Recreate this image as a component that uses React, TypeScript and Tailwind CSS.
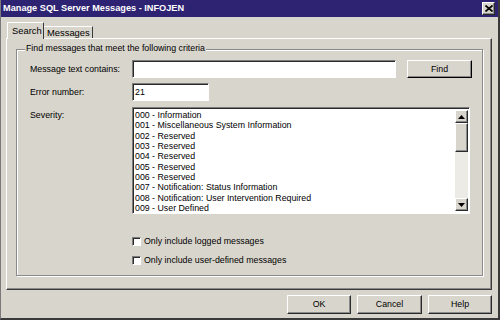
import React from "react";

const raised =
  "border border-t-white border-l-white border-r-[#2a2a2a] border-b-[#2a2a2a] shadow-[inset_-1px_-1px_0_#8a8a8a]";
const sunken =
  "border border-t-[#7c7c7c] border-l-[#7c7c7c] border-r-white border-b-white shadow-[inset_1px_1px_0_#2a2a2a]";

const severities = [
  "000 - Information",
  "001 - Miscellaneous System Information",
  "002 - Reserved",
  "003 - Reserved",
  "004 - Reserved",
  "005 - Reserved",
  "006 - Reserved",
  "007 - Notification: Status Information",
  "008 - Notification: User Intervention Required",
  "009 - User Defined",
];

function Arrow({ up }: { up?: boolean }) {
  return (
    <svg width="7" height="4" viewBox="0 0 7 4">
      <polygon points={up ? "3.5,0 7,4 0,4" : "0,0 7,0 3.5,4"} fill="#000" />
    </svg>
  );
}

function Button({ label, w }: { label: string; w: string }) {
  return (
    <div className={`${w} h-[19px] ${raised} bg-[#d8d5cc] flex items-center justify-center`}>
      {label}
    </div>
  );
}

function Check({ label }: { label: string }) {
  return (
    <div className="flex items-center h-[12px]">
      <div className={`w-[9px] h-[9px] ${sunken} bg-white`} />
      <span className="ml-[3px]">{label}</span>
    </div>
  );
}

export default function App() {
  return (
    <div className="w-[500px] h-[320px] bg-[#d8d5cc] flex flex-col overflow-hidden border-l border-r-2 border-b-2 border-l-[#7a7a7a] border-r-[#3a3a3a] border-b-[#3a3a3a] font-['Liberation_Sans',Arial,sans-serif] text-[8.8px] text-black leading-none">
      {/* title bar */}
      <div className="h-[17px] bg-[#2e2272] flex items-center justify-between pl-[2px] pr-[3px]">
        <span className="text-white font-bold text-[9.2px]">Manage SQL Server Messages - INFOJEN</span>
        <div className={`w-[13px] h-[13px] bg-[#d8d5cc] ${raised} flex items-center justify-center`}>
          <svg width="8" height="7" viewBox="0 0 8 7">
            <path d="M0.5 0.5 L7.5 6.5 M7.5 0.5 L0.5 6.5" stroke="#000" strokeWidth="1.7" />
          </svg>
        </div>
      </div>

      {/* tabs */}
      <div className="mt-[5px] ml-[6px] h-[16px] flex items-end relative z-10">
        <div className="h-[17px] -mb-[1px] w-[37px] bg-[#d8d5cc] border-t border-l border-r border-t-white border-l-white border-r-[#3a3a3a] rounded-t-[1px] flex items-center pl-[4px] text-[9.4px]">
          Search
        </div>
        <div className="h-[12px] w-[49px] border-t border-r border-t-white border-r-[#3a3a3a] flex items-center pl-[3px] text-[9.4px]">
          Messages
        </div>
      </div>

      {/* tab panel */}
      <div className="ml-[5px] mr-[6px] h-[252px] border border-t-white border-l-white border-r-[#3a3a3a] border-b-[#3a3a3a] shadow-[inset_-1px_-1px_0_#8a8a8a] flex flex-col">
        <div className="relative mt-[10px] ml-[9px] mr-[8px] h-[227px] border border-[#8a8a8a] shadow-[1px_1px_0_white,inset_1px_1px_0_white]">
          <span className="absolute -top-[6px] left-[8px] bg-[#d8d5cc] px-[1px]">
            Find messages that meet the following criteria
          </span>

          <div className="flex flex-col pl-[13px] pt-[10px]">
            <div className="flex items-center h-[18px]">
              <span className="w-[102px]">Message text contains:</span>
              <div className={`w-[264px] h-[18px] bg-white ${sunken}`} />
              <div className="ml-[11px]">
                <div className={`w-[65px] h-[18px] ${raised} border-r-black border-b-black flex items-center justify-center`}>
                  Find
                </div>
              </div>
            </div>

            <div className="flex items-center h-[18px] mt-[5px]">
              <span className="w-[102px]">Error number:</span>
              <div className={`w-[77px] h-[18px] bg-white ${sunken} flex items-center pl-[2px]`}>21</div>
            </div>

            <div className="flex mt-[6px]">
              <span className="w-[102px] pt-[4px]">Severity:</span>
              <div className={`w-[338px] h-[107px] bg-white ${sunken} flex p-[2px] pr-[1px]`}>
                <div className="flex-1 flex flex-col">
                  {severities.map((s) => (
                    <div key={s} className="h-[10.35px] leading-[10.35px] whitespace-nowrap">
                      {s}
                    </div>
                  ))}
                </div>
                <div className="w-[13px] flex flex-col bg-[#ecebe6]">
                  <div className={`h-[13px] bg-[#d8d5cc] ${raised} flex items-center justify-center`}>
                    <Arrow up />
                  </div>
                  <div className={`h-[29px] bg-[#d8d5cc] ${raised}`} />
                  <div className="flex-1" />
                  <div className={`h-[13px] bg-[#d8d5cc] ${raised} flex items-center justify-center`}>
                    <Arrow />
                  </div>
                </div>
              </div>
            </div>

            <div className="ml-[102px] mt-[21px] flex flex-col gap-[7px]">
              <Check label="Only include logged messages" />
              <Check label="Only include user-defined messages" />
            </div>
          </div>
        </div>
      </div>

      {/* dialog buttons */}
      <div className="mt-[5px] mr-[6px] flex justify-end gap-[6px]">
        <Button label="OK" w="w-[64px]" />
        <Button label="Cancel" w="w-[65px]" />
        <Button label="Help" w="w-[64px]" />
      </div>
    </div>
  );
}
